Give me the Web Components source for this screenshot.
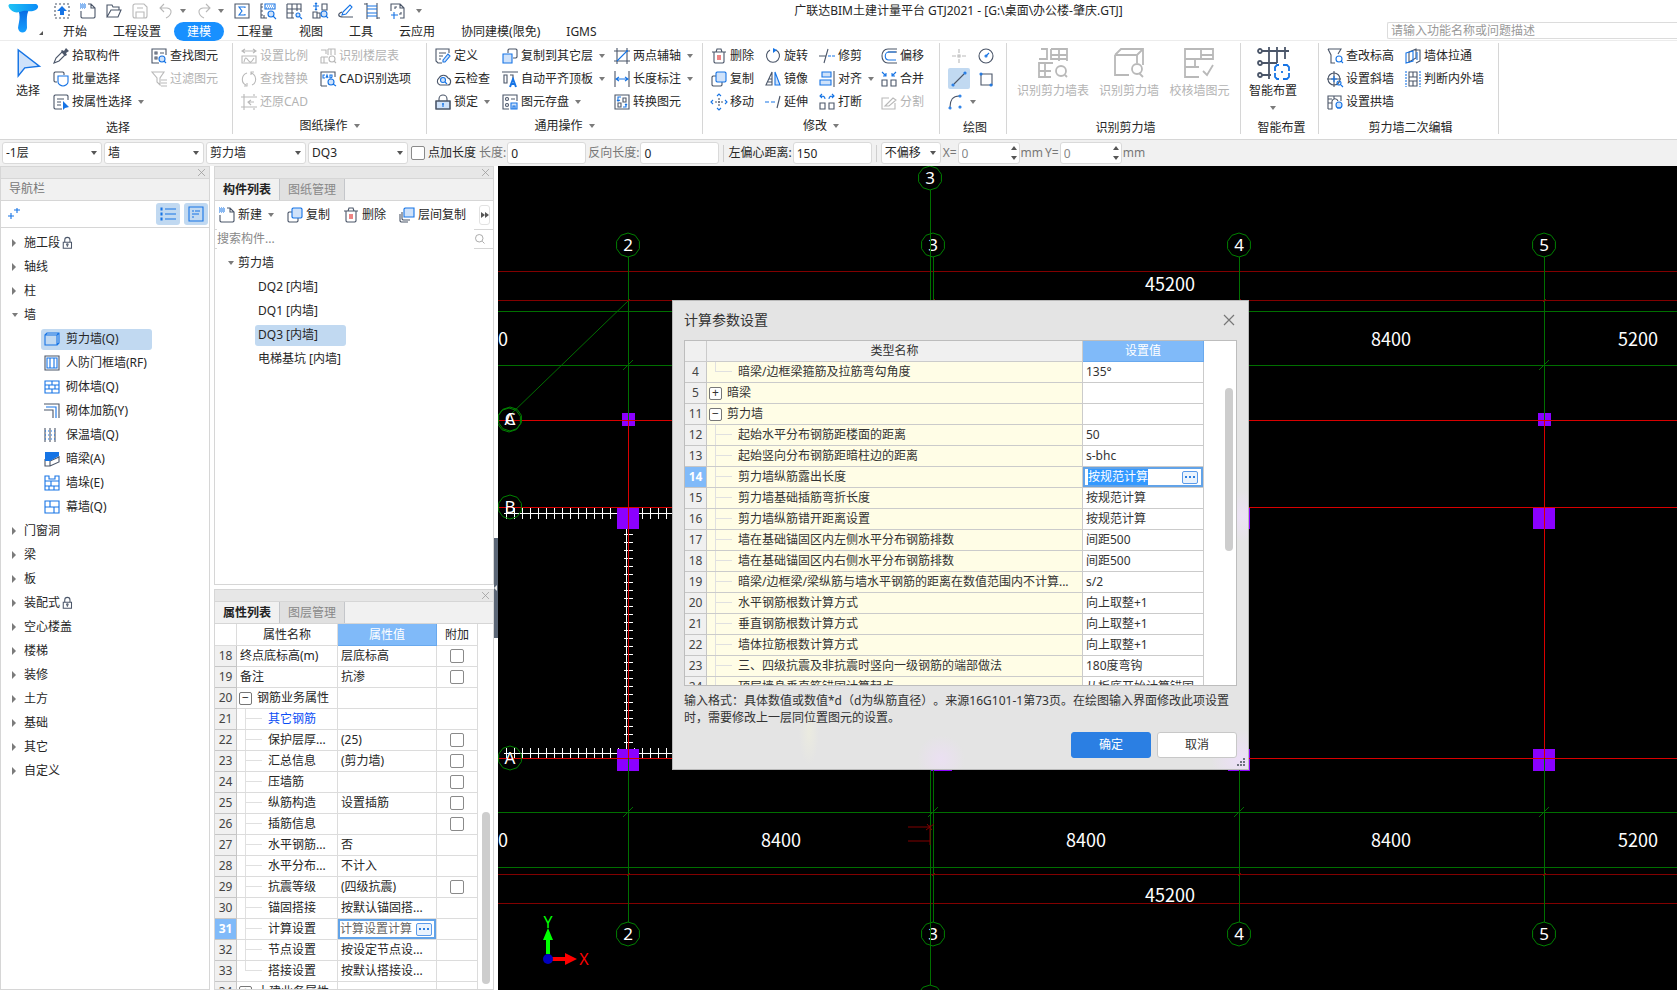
<!DOCTYPE html>
<html lang="zh-CN">
<head>
<meta charset="utf-8">
<title>广联达BIM土建计量平台 GTJ2021</title>
<style>
    html, body {
        height: 100%;
        margin: 0;
    }
    body {
        --blue: #1674e5;
        --slate: #4b5669;
        --pale: #cfe2fa;
        --line: #d6d6d6;
        --bar: #f1f1f1;
        --pick: #c1d9f1;
        --head: #80baf9;
        font: 12px/20px "Noto Sans", "Noto Sans CJK SC", sans-serif;
        color: #262626;
        background: #fff;
        overflow: hidden;
    }
</style>
</head>
<body>
<app-shell></app-shell>

<script>
// 16x16 drawings: plain strokes are slate, .b blue, .p pale fill, .k solid blue, .g solid slate
const ICONS = {
    upload: '<path d="M1 1h14v14H1z" stroke-dasharray="2 2"/><path class="k" d="M8 3l5 5h-3v4H6V8H3z"/>',
    fresh: '<path d="M8 1h3l4 4v9l-1 1H2l-1-1V8M11 1v4h4"/><path class="b" stroke-dasharray="1 1" d="M0 1h5M1 2h5M0 3h5M1 4h5M0 5h5"/>',
    open: '<path d="M1 14V2h5l1 2h6v3M1 14l4-7h10l-3 7z"/>',
    save: '<path d="M1 3a2 2 0 0 1 2-2h9l3 3v9a2 2 0 0 1-2 2H3a2 2 0 0 1-2-2zM4 15V9h8v6M5 5h6"/>',
    undo: '<path d="M6 1L2 5l4 4M2 5h7c6 1 5 7-1 10"/>',
    redo: '<path d="M10 1l4 4-4 4M14 5H7c-6 1-5 7 1 10"/>',
    sum: '<path d="M1 1h14v14H1z"/><path class="b" d="M11 5V4H5l3 4-3 4h6v-1"/>',
    ruler: '<path d="M3 1H1v14h6M1 4h2M1 8h2M1 12h2M4 12v3"/><path class="b" d="M5 1h10v5H5z"/><path class="b" stroke-dasharray="1 1" d="M7 3h7M6 5h8"/><circle class="b p" cx="11" cy="11" r="3"/><path class="b" d="M13 13l3 3"/>',
    grid: '<path d="M1 1h14v8M1 1v14h7M1 6h14M1 10h7M6 1v14M11 1v7"/><circle class="b p" cx="12" cy="12" r="2"/><path class="b" d="M14 14l2 2"/>',
    shift: '<path d="M10 1h5v6h-5zM1 9h4v6H1zM5 10h3v5H5"/><path class="b" d="M4 0v7M1 3h6M3 1l1-1 1 1M3 6l1 1 1-1"/><circle class="b p" cx="12" cy="11" r="3"/><path class="b" d="M14 13l2 2"/>',
    pen: '<path class="b" d="M5 9l7-7 2 2-6 7-4 1z"/><path d="M4 9c-5 2-4 5 1 5h10"/>',
    ladder: '<path d="M3 0v16M13 0v16M0 1h3M13 15h3"/><path class="b" d="M3 3h10M3 6h10M3 10h10M3 13h10"/>',
    addpage: '<path d="M10 1l4 4v10h-4M1 8V1h9v4h4M5 6V4h2M11 9v2H9"/><path class="b" d="M1 12h7M4 9v7"/>',
    cursor: '<path class="b p" d="M2 0v16l4-5 9-1z"/>',
    dropper: '<path d="M1 15l2-5 6-6 3 3-6 6z"/><path class="g" d="M8 3l1-1 2 1 2-3 3 3-3 2 1 2-2 1z"/>',
    batch: '<path d="M4 11H2l-1-1V2l1-1h8l1 1v2"/><path class="b" d="M5 5h10v6c0 2-3 4-5 4s-5-2-5-4z"/>',
    byprop: '<path d="M9 15H2l-1-1V2l1-1h12l1 1v4M4 5h7M4 8h4M4 11h4"/><path class="k" d="M10 7v9l2-2 4-1z"/>',
    find: '<path d="M15 7V1H1v14h7M4 4h2v2H4zM4 9h2v2H4zM9 5h4"/><circle class="b p" cx="11" cy="11" r="3"/><path class="b" d="M13 13l2 2"/>',
    filter: '<path d="M1 1h12L9 7v7l-3-3V7zM10 9h6M10 12h6M10 15h6"/>',
    scale: '<path d="M1 3h14M4 1L1 3l3 2M12 1l3 2-3 2M1 8h14v7H1zM3 14c1-5 2-5 4-2s3 3 6-2"/>',
    floors: '<path d="M1 2h5v4M8 1h7v6M8 7V1M11 1v6M1 9h7M4 9v6M1 9v6h7"/><circle cx="12" cy="11" r="3"/><path d="M14 13l2 2"/>',
    swap: '<path d="M6 2C0 4 0 12 5 14M10 2c6 2 6 10 1 12M3 15h3v-3M13 1h-3v3"/>',
    cad: '<path d="M1 15V1h14v5M1 15h6"/><path class="b" d="M5 4H3v3h2M6 7l1-3 1 3M10 4v3h1l1-1V4z"/><circle class="b p" cx="11" cy="11" r="3"/><path class="b" d="M13 13l3 2"/>',
    restore: '<path d="M3 0v16M0 3h16M0 13h16M13 0v2M10 6L7 8l3 3M7 8h6M13 14v2"/>',
    define: '<path d="M7 15H3L1 13V1h13v4M4 5h7M4 8h4M4 11h2"/><path class="b p" d="M8 12l5-6 2 2-5 6H8z"/>',
    cloud: '<path d="M5 14a4 4 0 0 1-1-7 5 5 0 0 1 9 0c4 1 3 7 0 7z"/><circle class="b p" cx="8" cy="9" r="2.5"/><path class="b" d="M10 11l2 2"/>',
    lock: '<path class="p" d="M1 7h14v8H1z"/><path d="M1 7h14v8H1zM4 7V5a4 4 0 0 1 8 0v2"/><path class="b" d="M8 9v4M7 10h2"/>',
    padlock: '<path d="M3 7h11v8H3zM5 7V4a3 3 0 0 1 7 0v3"/><circle cx="8.500" cy="10" r="1"/><path d="M8.500 11v2"/>',
    tofloor: '<path d="M6 5V2l1-1h7l1 1v7l-1 1h-3"/><path class="b p" d="M1 6h9v9H1z"/>',
    align: '<path d="M0 1h16M2 4h3v8H2zM8 4h3v4"/><path class="b" stroke-width="2" d="M8 16l3-8 3 8M9 13h4"/>',
    store: '<path d="M7 15H1V1h14v6M9 5h4"/><circle cx="5" cy="5" r="1.5"/><circle cx="5" cy="11" r="1.5"/><path class="b p" d="M9 9h6v6H9zM11 15v-3h2v3"/>',
    axis: '<path d="M3 0v16M0 3h16M0 13h16M13 0v16"/><path class="b" d="M3 13L13 3"/><circle class="k" cx="13" cy="3" r="1"/>',
    dim: '<path d="M1 0v16M15 0v16"/><path class="b" d="M2 8h12M5 6L2 8l3 2M11 6l3 2-3 2"/>',
    convert: '<path d="M1 1h14v14H1zM9 4h3v4H9zM4 9h3v4H4z"/><path class="b" d="M7 3H4v4M3 6l1 1 2-1M9 13h3v-3M11 11l1-1 1 1"/>',
    trash: '<path d="M1 4h14M5 4l1-3h4l1 3M3 4v10l1 1h8l1-1V4"/><path class="r" d="M7 7v5M9 7v5"/>',
    copy: '<path d="M5 5H2L1 6v8l1 1h8l1-1v-3"/><path class="b p" d="M6 1h8l1 1v8l-1 1H6L5 10V2z"/>',
    layers: '<path d="M3 5v7l1 1h7M1 7v7l1 1h7"/><path class="b p" d="M6 1h9v9H5V2z"/>',
    move: '<path stroke-dasharray="2 1" d="M8 4v8M4 8h8"/><path class="b" d="M6 2l2-2 2 2M6 14l2 2 2-2M2 6L0 8l2 2M14 6l2 2-2 2"/>',
    rotate: '<path d="M11 2a6.500 6.500 0 1 1-6 0"/><path class="k" d="M8 0l4 2-4 3z"/>',
    mirror: '<path d="M7 1v13H1zM3 11h4M4 8h3"/><path class="b p" d="M10 1v13h5z"/>',
    extend: '<path d="M15 2l-3 12"/><path class="b" d="M0 8h4M6 8h4"/>',
    trim: '<path d="M0 8h7M9 1L5 15"/><path class="b" d="M9 8h3M13 8h3"/>',
    aligned: '<path d="M15 0v16"/><path class="b p" d="M3 1h9v5H3zM1 9h11v5H1z"/>',
    cut: '<path d="M1 9h5v6H1zM10 9h5v6h-5z"/><path class="b" d="M6 5c0-3-2-3-5-3M3 0L1 2l2 2M10 5c0-3 2-3 5-3M13 0l2 2-2 2"/>',
    offset: '<path d="M16 1H7C-1 1-1 15 7 15h9M16 4H7"/><path class="b" d="M15 4H8c-5 0-5 8 0 8h7"/>',
    merge: '<path d="M1 9h5v6H1zM10 9h5v6h-5z"/><path class="b" d="M1 1l4 4M5 2v3H2M15 1l-4 4M11 2v3h3"/>',
    divide: '<path d="M8 4H1v11h13V9M4 12l8-8 3 2-7 6z"/>',
    point: '<path d="M8 1v4M8 11v4M1 8h4M11 8h4M7 7h2v2H7z"/>',
    circle: '<circle cx="8" cy="8" r="7"/><path class="b" d="M8 8l3-3"/><circle class="b" cx="8" cy="8" r="1"/>',
    line: '<path d="M3 13L13 3"/><circle class="b" cx="2" cy="14" r="1"/><circle class="b" cx="14" cy="2" r="1"/>',
    rect: '<path d="M3 3h11v11H3z"/><circle class="b" cx="3" cy="3" r="1"/><circle class="b" cx="13" cy="14" r="1"/>',
    arc: '<path d="M2 13C2 6 5 2 11 2"/><circle class="b" cx="2" cy="14" r="1"/><circle class="b" cx="12" cy="2" r="1"/><circle class="b" cx="12" cy="13" r="1"/>',
    recogTable: '<path d="M2 1h3v5H1M7 1h8v6M7 1v5h8M7 4h8M11 1v6M4 8H1v7h6M1 12h6M4 8v7M4 8h4"/><circle cx="12" cy="12" r="2.500"/><path d="M14 14l1 1"/>',
    recogWall: '<path d="M1 4l3-3h11v8M1 4h11v4M1 4v10h7M12 4l3-3"/><circle cx="12" cy="11" r="2.500"/><path d="M13 13l2 2"/>',
    check: '<path d="M1 1h14v5H1zM9 1v5M9 4h6M1 6v9h7M1 10h7M6 6v4M10 12l2 2 3-5"/>',
    smart: '<path d="M1 2h15M1 8h9M1 14h6M6 0v16M10 0v8M14 0v6"/><circle class="w" cx="1.500" cy="2" r="1"/><circle class="w" cx="1.500" cy="8" r="1"/><circle class="w" cx="1.500" cy="14" r="1"/><path class="b" d="M9 12v-2l1-1h1M13 9h2l1 1v2M9 13v2l1 1h1M13 16h2l1-1v-2M12.500 12v1"/>',
    elev: '<path d="M1 1h13l-3 5M1 1l3 6v8h4"/><circle class="b" cx="12" cy="11" r="3"/><path class="b" d="M14 13l2 2"/>',
    slant: '<circle cx="7" cy="8" r="6"/><path d="M7 0v16M0 8h14"/><path class="b" d="M7 5v6M4 8h6"/><circle class="b" cx="12" cy="12" r="2"/><path class="b" d="M14 14l2 2"/>',
    arch: '<path d="M1 15V2h13v5M1 5h4M1 9h4M1 15h4V7c1-3 5-3 6 0M7 2v3"/><circle class="b p" cx="12" cy="11" r="3"/><path class="b" d="M10 14h4"/>',
    through: '<path d="M4 4l7-3v9l-7 4zM9 2h6v11l-4 2"/><path class="b" d="M1 5l7-2v10l-7 2zM12 4v8"/>',
    inout: '<path d="M4 1h8v14H4zM4 6h8M4 10h8M8 1v5M8 10v5"/><path class="b" stroke-dasharray="2 1" d="M1 0v16M15 0v16"/>',
    plus2: '<path class="b" d="M11 2v5M8 4h6M5 7v6M2 10h6"/>',
    list: '<path class="b" d="M5 3h11M5 8h11M5 13h11M1 2h1v2H1zM1 7h1v2H1zM1 12h1v2H1z"/>',
    card: '<path class="b" d="M1 1h14v14H1zM4 5h2M7 5h5M4 8h7M4 11h2"/>',
    wall: '<path class="b" d="M1 4l2-2h12v10l-2 2M1 4h12v10H1zM13 4l2-2"/>',
    frame: '<path d="M1 1h14v14H1z"/><path class="b" d="M3 3h10v10H3zM6 3v10M10 3v10"/>',
    brick: '<path class="b" d="M1 2h14v12H1zM1 6h14M1 10h14M8 2v4M5 6v4M11 6v4M8 10v4"/>',
    rebar: '<path d="M0 1h15v14M0 7h9v8"/><path class="b" d="M2 4h10v11"/>',
    insul: '<path d="M1 1v14M6 1v14M11 1v14"/><path class="b" stroke-dasharray="1 2" d="M1 4h12M1 8h12M1 12h12"/>',
    beam: '<path d="M1 8v7h5l9-4V5M6 15v-5l9-4"/><path class="k" d="M1 1h14v4L6 10H1z"/>',
    pier: '<path class="b" d="M1 1h4v3h6V1h4v14H1zM1 6h14M1 11h14M7 6v5M10 11v4M5 11v4"/>',
    curtain: '<path class="b" d="M1 2h14v12H1zM1 8h14M6 2v6M10 8v6"/>',
    search: '<circle cx="7" cy="7" r="5"/><path d="M11 11l3 3"/>',
    close: '<path d="M3 3l10 10M13 3L3 13"/>'
};

function attach(el, html) {
    const template = document.createElement('template');
    template.innerHTML = html;
    el.attachShadow({ mode: 'open' }).appendChild(template.content.cloneNode(true));
    return el.shadowRoot;
}

const caretCss = `
    .caret {
        flex: none;
        width: 0;
        border: 3px solid transparent;
        border-top: 4px solid #7b7b7b;
        border-bottom: 0;
    }
`;

class UiIcon extends HTMLElement {
    connectedCallback() {
        if (this.shadowRoot) return;
        attach(this, `
            <style>
                :host { display: inline-block; flex: none; width: 16px; height: 16px; }
                svg { display: block; width: 100%; height: 100%; overflow: visible; fill: none; stroke: var(--slate); stroke-width: var(--stroke, 1.1); }
                .b { stroke: var(--blue); }
                .r { stroke: #e02020; }
                .p { fill: var(--pale); }
                .k { fill: var(--blue); stroke: none; }
                .g { fill: var(--slate); stroke: none; }
                .w { fill: #fff; }
            </style>
            <svg viewBox="0 0 16 16" aria-hidden="true">${ICONS[this.getAttribute('name')] || ''}</svg>
        `);
    }
}
customElements.define('ui-icon', UiIcon);

// tool-button: icon="" [caret] [off] [big] [picked]
class ToolButton extends HTMLElement {
    connectedCallback() {
        if (this.shadowRoot) return;
        const off = this.hasAttribute('off');
        attach(this, `
            <style>
                :host { display: flex; }
                :host([off]) { --blue: #b9b9b9; --slate: #b9b9b9; --pale: none; }
                button {
                    display: flex;
                    align-items: center;
                    gap: 3px;
                    border: 0;
                    padding: 0;
                    background: none;
                    font: inherit;
                    color: inherit;
                    white-space: nowrap;
                }
                button:disabled { color: #b3b3b3; }
                .caret { margin-left: 3px; }
                ${caretCss}
                :host([big]) { grid-row: span 3; justify-content: center; --stroke: 0.9; }
                :host([big]) button { flex-direction: column; justify-content: flex-start; gap: 2px; padding-top: 3px; }
                :host([big]) ui-icon { width: 32px; height: 32px; }
                :host([big="small"]) { justify-content: flex-start; padding-left: 7px; }
                :host([big="small"]) ui-icon { width: 26px; height: 26px; margin: 3px 0; }
                :host([big]) .caret { margin: 3px 0 0; }
                :host([picked]) button { background: var(--pick); padding: 2px 3px; margin: 1px 0; border-radius: 2px; }
                :host([plain]) button { padding: 0 3px; }
            </style>
            <button type="button" ${off ? 'disabled' : ''} aria-label="${this.getAttribute('icon')}">
                <ui-icon name="${this.getAttribute('icon')}"></ui-icon>
                <slot></slot>
                ${this.hasAttribute('caret') ? '<span class="caret"></span>' : ''}
            </button>
        `);
        if (this.textContent.trim()) this.shadowRoot.querySelector('button').removeAttribute('aria-label');
    }
}
customElements.define('tool-button', ToolButton);

class RibbonGroup extends HTMLElement {
    connectedCallback() {
        if (this.shadowRoot) return;
        attach(this, `
            <style>
                :host {
                    display: block;
                    flex: none;
                    padding: 3px 9px 0 8px;
                    background: linear-gradient(var(--line), var(--line)) right 2px / 1px 91px no-repeat;
                }
                .tools {
                    display: grid;
                    grid-template: repeat(3, 23px) / ${this.getAttribute('cols')};
                    grid-auto-flow: column;
                }
                .label { display: flex; justify-content: center; align-items: center; gap: 6px; box-sizing: border-box; height: 26px; }
                :host(:not([caret])) .label { padding: 3px 0 0 4px; }
                ${caretCss}
            </style>
            <div class="tools"><slot></slot></div>
            <div class="label">${this.getAttribute('label')}${this.hasAttribute('caret') ? '<span class="caret"></span>' : ''}</div>
        `);
    }
}
customElements.define('ribbon-group', RibbonGroup);

class AppTitle extends HTMLElement {
    connectedCallback() {
        const quick = names => names.map(n => `<tool-button icon="${n}"></tool-button>`).join('');
        const tabs = ['开始', '工程设置', '建模', '工程量', '视图', '工具', '云应用', '协同建模(限免)', 'IGMS'];
        attach(this, `
            <style>
                :host { display: grid; grid-template: 21px 20px / 50px 1fr; box-shadow: inset 0 -1px #ececec; }
                .logo { grid-row: span 2; display: flex; align-items: flex-end; padding-left: 7px; }
                .logo i { border: 4px solid transparent; border-width: 4px 0 0 4px; border-bottom: 4px solid #555; border-top: 0; margin-bottom: 6px; }
                .quick, nav { display: flex; align-items: center; }
                nav { align-items: flex-end; }
                .quick { gap: 10px; padding-left: 4px; }
                h1 { flex: 1; margin: 0; padding-right: 192px; font: inherit; text-align: center; }
                nav button {
                    border: 0;
                    border-radius: 10px;
                    padding: 0 13px;
                    height: 19px;
                    font: inherit;
                    line-height: 19px;
                    color: inherit;
                    background: none;
                    white-space: nowrap;
                }
                nav .on { background: #1890ff; color: #fff; }
                input {
                    width: 290px;
                    height: 17px;
                    box-sizing: border-box;
                    margin: 0 0 2px auto;
                    border: 1px solid #dcdcdc;
                    border-right: 0;
                    border-radius: 2px 0 0 2px;
                    padding: 0 3px;
                    font: inherit;
                    line-height: 15px;
                    outline: none;
                }
                input::placeholder { color: #999; }
                ${caretCss}
            </style>
            <div class="logo">
                <svg width="32" height="41" viewBox="0 0 32 41">
                    <defs>
                        <linearGradient id="bar"><stop offset="0" stop-color="#20c3f4"/><stop offset="1" stop-color="#0a8cf8"/></linearGradient>
                        <linearGradient id="stem" x2="0" y2="1"><stop offset="0" stop-color="#0866e0"/><stop offset="1" stop-color="#16a0ff"/></linearGradient>
                    </defs>
                    <path fill="url(#stem)" d="M11 9l12-1c-4 6-3 11-3 20-1 6-8 6-9 0 1-7 3-11 0-19z"/>
                    <path fill="url(#bar)" d="M3 4h26c4 2 2 6-3 7-4 1-6-1-10 0-5 2-9 2-12-1-2-2-4-5-1-6z"/>
                </svg><i></i>
            </div>
            <div class="quick">
                ${quick(['upload', 'fresh', 'open'])}
                <tool-button icon="save" off></tool-button>
                <tool-button icon="undo" off caret></tool-button>
                <tool-button icon="redo" off caret></tool-button>
                ${quick(['sum', 'ruler', 'grid', 'shift', 'pen', 'ladder', 'addpage'])}
                <span class="caret"></span>
                <h1>广联达BIM土建计量平台 GTJ2021 - [G:\\桌面\\办公楼-肇庆.GTJ]</h1>
            </div>
            <nav>
                ${tabs.map(t => `<button type="button" class="${t === '建模' ? 'on' : ''}">${t}</button>`).join('')}
                <input type="text" aria-label="搜索功能" placeholder="请输入功能名称或问题描述">
            </nav>
        `);
    }
}
customElements.define('app-title', AppTitle);

class AppRibbon extends HTMLElement {
    connectedCallback() {
        attach(this, `
            <style>
                :host { display: flex; height: 98px; overflow: hidden; }
            </style>
            <ribbon-group cols="45px 98px 73px" label="选择">
                <tool-button icon="cursor" big="small">选择</tool-button>
                <tool-button icon="dropper">拾取构件</tool-button>
                <tool-button icon="batch">批量选择</tool-button>
                <tool-button icon="byprop" caret>按属性选择</tool-button>
                <tool-button icon="find">查找图元</tool-button>
                <tool-button icon="filter" off>过滤图元</tool-button>
            </ribbon-group>
            <ribbon-group cols="79px 98px" label="图纸操作" caret>
                <tool-button icon="scale" off>设置比例</tool-button>
                <tool-button icon="swap" off>查找替换</tool-button>
                <tool-button icon="restore" off>还原CAD</tool-button>
                <tool-button icon="floors" off>识别楼层表</tool-button>
                <tool-button icon="cad">CAD识别选项</tool-button>
            </ribbon-group>
            <ribbon-group cols="67px 112px 80px" label="通用操作" caret>
                <tool-button icon="define">定义</tool-button>
                <tool-button icon="cloud">云检查</tool-button>
                <tool-button icon="lock" caret>锁定</tool-button>
                <tool-button icon="tofloor" caret>复制到其它层</tool-button>
                <tool-button icon="align" caret>自动平齐顶板</tool-button>
                <tool-button icon="store" caret>图元存盘</tool-button>
                <tool-button icon="axis" caret>两点辅轴</tool-button>
                <tool-button icon="dim" caret>长度标注</tool-button>
                <tool-button icon="convert">转换图元</tool-button>
            </ribbon-group>
            <ribbon-group cols="54px 54px 62px 50px" label="修改" caret>
                <tool-button icon="trash">删除</tool-button>
                <tool-button icon="copy">复制</tool-button>
                <tool-button icon="move">移动</tool-button>
                <tool-button icon="rotate">旋转</tool-button>
                <tool-button icon="mirror">镜像</tool-button>
                <tool-button icon="extend">延伸</tool-button>
                <tool-button icon="trim">修剪</tool-button>
                <tool-button icon="aligned" caret>对齐</tool-button>
                <tool-button icon="cut">打断</tool-button>
                <tool-button icon="offset">偏移</tool-button>
                <tool-button icon="merge">合并</tool-button>
                <tool-button icon="divide" off>分割</tool-button>
            </ribbon-group>
            <ribbon-group cols="30px 20px" label="绘图">
                <tool-button icon="point" off plain></tool-button>
                <tool-button icon="line" picked></tool-button>
                <tool-button icon="arc" caret></tool-button>
                <tool-button icon="circle"></tool-button>
                <tool-button icon="rect"></tool-button>
            </ribbon-group>
            <ribbon-group cols="76px 76px 65px" label="识别剪力墙">
                <tool-button icon="recogTable" big off>识别剪力墙表</tool-button>
                <tool-button icon="recogWall" big off>识别剪力墙</tool-button>
                <tool-button icon="check" big off>校核墙图元</tool-button>
            </ribbon-group>
            <ribbon-group cols="48px 13px" label="智能布置">
                <tool-button icon="smart" big caret>智能布置</tool-button>
            </ribbon-group>
            <ribbon-group cols="78px 85px" label="剪力墙二次编辑">
                <tool-button icon="elev">查改标高</tool-button>
                <tool-button icon="slant">设置斜墙</tool-button>
                <tool-button icon="arch">设置拱墙</tool-button>
                <tool-button icon="through">墙体拉通</tool-button>
                <tool-button icon="inout">判断内外墙</tool-button>
            </ribbon-group>
        `);
    }
}
customElements.define('app-ribbon', AppRibbon);

class OptionBar extends HTMLElement {
    connectedCallback() {
        const combo = (label, value, cls = '') => `
            <span class="combo ${cls}"><select aria-label="${label}"><option>${value}</option></select><i></i></span>`;
        attach(this, `
            <style>
                :host {
                    display: flex;
                    align-items: center;
                    height: 26px;
                    padding-left: 2px;
                    border-top: 1px solid var(--line);
                    background: var(--bar);
                    white-space: nowrap;
                }
                select, input[type=text], input[type=number] {
                    appearance: none;
                    box-sizing: border-box;
                    width: 100%;
                    height: 22px;
                    border: 1px solid #dadada;
                    border-radius: 3px;
                    padding: 0 3px;
                    background: #fff;
                    font: inherit;
                    color: inherit;
                    outline: none;
                }
                input::-webkit-inner-spin-button { display: none; }
                .combo, .spin { display: grid; align-items: center; flex: none; width: 100px; margin-right: 2px; }
                .combo > *, .spin > * { grid-area: 1 / 1; }
                .combo.short { width: 60px; }
                .combo i { justify-self: end; margin-right: 5px; border: 3px solid transparent; border-top: 4px solid #555; border-bottom: 0; }
                .field { display: flex; align-items: center; gap: 1px; }
                .field input[type=text] { width: 79px; margin-right: 2px; }
                .spin { width: 62px; margin: 0; color: #888; }
                .spin span { justify-self: end; display: grid; gap: 6px; margin-right: 3px; }
                .spin b { border: 3px solid transparent; border-bottom: 4px solid #555; border-top: 0; }
                .spin b + b { border-top: 4px solid #555; border-bottom: 0; }
                .dim { color: #777; }
                .dim + .dim:last-child { margin-left: 2px; }
                .dim input[type=text] { color: #262626; }
                .check { display: flex; align-items: center; gap: 3px; margin: 0 3px 0 1px; }
                .check input {
                    appearance: none;
                    width: 14px;
                    height: 14px;
                    margin: 0;
                    border: 1px solid #8a8a8a;
                    border-radius: 2px;
                    background: #fff;
                }
                hr { width: 1px; height: 17px; margin: 0 4px 0 2px; border: 0; background: #cfcfcf; }
            </style>
            ${combo('楼层', '-1层')}${combo('类别', '墙')}${combo('类型', '剪力墙')}${combo('构件', 'DQ3')}
            <label class="check"><input type="checkbox">点加长度</label>
            <label class="field dim">长度:<input type="text" value="0"></label>
            <label class="field dim">反向长度:<input type="text" value="0"></label>
            <hr>
            <label class="field">左偏心距离:<input type="text" value="150"></label>
            <hr>
            ${combo('偏移', '不偏移', 'short')}
            <label class="field dim">X=<span class="spin"><input type="number" value="0"><span><b></b><b></b></span></span>mm</label>
            <label class="field dim">Y=<span class="spin"><input type="number" value="0"><span><b></b><b></b></span></span>mm</label>
        `);
    }
}
customElements.define('option-bar', OptionBar);

// dock-panel: either heading="" or tabs="a,b" (the first tab is active)
class DockPanel extends HTMLElement {
    connectedCallback() {
        if (this.shadowRoot) return;
        const tabs = this.getAttribute('tabs');
        const head = tabs
            ? tabs.split(',').map((t, i) => `<button type="button" role="tab" aria-selected="${i === 0}">${t}</button>`).join('')
            : `<span>${this.getAttribute('heading')}</span>`;
        attach(this, `
            <style>
                :host {
                    display: flex;
                    flex-direction: column;
                    box-sizing: border-box;
                    border: 1px solid var(--line);
                    background: #fff;
                    overflow: hidden;
                }
                .strip { flex: none; height: 11px; display: flex; justify-content: flex-end; background: #e7e7e7; border-bottom: 1px solid var(--line); }
                .strip button { border: 0; padding: 0; margin-right: 2px; height: 11px; background: none; --slate: #999; }
                .strip ui-icon { width: 11px; height: 11px; display: block; }
                header { flex: none; display: flex; height: 21px; background: var(--bar); border-bottom: 1px solid var(--line); color: #777; }
                header span { padding-left: 8px; line-height: 20px; }
                header button {
                    border: 0;
                    border-right: 1px solid #c4c6ca;
                    padding: 0 8px;
                    background: #e0e0e0;
                    font: inherit;
                    color: #888;
                }
                header button[aria-selected=true] { background: var(--bar); color: #222; font-weight: bold; }
            </style>
            <div class="strip"><button type="button" aria-label="关闭"><ui-icon name="close"></ui-icon></button></div>
            <header>${head}</header>
            <slot></slot>
        `);
    }
}
customElements.define('dock-panel', DockPanel);

// tree-item: [state=open|closed|leaf] [icon] [picked] [locked]
class TreeItem extends HTMLElement {
    connectedCallback() {
        if (this.shadowRoot) return;
        const icon = this.getAttribute('icon');
        attach(this, `
            <style>
                :host { display: flex; align-items: center; height: 24px; padding-left: var(--indent, 11px); }
                :host([state=leaf]) { padding-left: var(--leaf-indent, 40px); }
                i { flex: none; width: 6px; margin-right: var(--arrow-gap, 6px); }
                i::before { content: ""; display: block; width: 0; border: 4px solid transparent; border-left: 4px solid #7b7b7b; border-right: 0; }
                :host([state=open]) i::before { border: 3px solid transparent; border-top: 4px solid #7b7b7b; border-bottom: 0; }
                :host([state=leaf]) i { display: none; }
                .text { display: flex; align-items: center; gap: 6px; box-sizing: border-box; height: 21px; padding: 0 3px; border-radius: 3px; white-space: nowrap; }
                :host([state=open]) .text, :host([state=closed]) .text { padding: 0; gap: 1px; }
                :host([picked]) .text { background: var(--pick); min-width: var(--pick-width, 111px); }
                .lock { width: 12px; height: 12px; --stroke: 1.4; }
            </style>
            <i></i>
            <span class="text">
                ${icon ? `<ui-icon name="${icon}"></ui-icon>` : ''}<span><slot></slot></span>
                ${this.hasAttribute('locked') ? '<ui-icon class="lock" name="padlock"></ui-icon>' : ''}
            </span>
        `);
    }
}
customElements.define('tree-item', TreeItem);

class NavPanel extends HTMLElement {
    connectedCallback() {
        const walls = [
            ['wall', '剪力墙(Q)'], ['frame', '人防门框墙(RF)'], ['brick', '砌体墙(Q)'], ['rebar', '砌体加筋(Y)'],
            ['insul', '保温墙(Q)'], ['beam', '暗梁(A)'], ['pier', '墙垛(E)'], ['curtain', '幕墙(Q)']
        ];
        const rest = ['门窗洞', '梁', '板', '装配式', '空心楼盖', '楼梯', '装修', '土方', '基础', '其它', '自定义'];
        attach(this, `
            <style>
                :host { display: grid; }
                .bar { display: flex; align-items: center; gap: 4px; height: 26px; padding: 0 1px 0 5px; border-bottom: 1px solid var(--line); margin-bottom: 3px; }
                .bar button { border: 0; padding: 3px 4px; height: 22px; border-radius: 3px; background: var(--pick); }
                .bar button:first-child { margin-right: auto; padding: 3px 0; background: none; }
                .bar ui-icon { display: block; }
            </style>
            <dock-panel heading="导航栏">
                <div class="bar">
                    <button type="button" aria-label="添加"><ui-icon name="plus2"></ui-icon></button>
                    <button type="button" aria-label="列表"><ui-icon name="list"></ui-icon></button>
                    <button type="button" aria-label="卡片"><ui-icon name="card"></ui-icon></button>
                </div>
                <tree-item state="closed" locked>施工段</tree-item>
                <tree-item state="closed">轴线</tree-item>
                <tree-item state="closed">柱</tree-item>
                <tree-item state="open">墙</tree-item>
                ${walls.map(([icon, text], i) => `<tree-item state="leaf" icon="${icon}" ${i ? '' : 'picked'}>${text}</tree-item>`).join('')}
                ${rest.map(t => `<tree-item state="closed" ${t === '装配式' ? 'locked' : ''}>${t}</tree-item>`).join('')}
            </dock-panel>
        `);
    }
}
customElements.define('nav-panel', NavPanel);

class ComponentPanel extends HTMLElement {
    connectedCallback() {
        attach(this, `
            <style>
                :host { display: grid; --indent: 13px; --arrow-gap: 4px; --leaf-indent: 40px; --pick-width: 91px; }
                .bar { display: flex; align-items: center; justify-content: space-between; height: 28px; padding: 0 3px 0 4px; border-bottom: 1px solid var(--line); }
                .more { border: 1px solid #e2e2e2; border-radius: 3px; padding: 0; width: 11px; height: 20px; background: #fff; display: flex; align-items: center; justify-content: center; }
                .more i { border: 3px solid transparent; border-left: 4px solid #555; border-right: 0; }
                .search { display: flex; align-items: center; height: 18px; border-bottom: 1px solid var(--line); padding: 0 7px 0 2px; margin-bottom: 2px; --slate: #999; }
                .search input { flex: 1; min-width: 0; border: 0; padding: 0; font: inherit; outline: none; }
                .search input::placeholder { color: #888; }
                .search ui-icon { width: 12px; height: 12px; }
            </style>
            <dock-panel tabs="构件列表,图纸管理">
                <div class="bar">
                    <tool-button icon="fresh" caret>新建</tool-button>
                    <tool-button icon="copy">复制</tool-button>
                    <tool-button icon="trash">删除</tool-button>
                    <tool-button icon="layers">层间复制</tool-button>
                    <button class="more" type="button" aria-label="更多"><i></i><i></i></button>
                </div>
                <div class="search">
                    <input type="text" aria-label="搜索构件" placeholder="搜索构件...">
                    <ui-icon name="search"></ui-icon>
                </div>
                <tree-item state="open">剪力墙</tree-item>
                <tree-item state="leaf">DQ2 [内墙]</tree-item>
                <tree-item state="leaf">DQ1 [内墙]</tree-item>
                <tree-item state="leaf" picked>DQ3 [内墙]</tree-item>
                <tree-item state="leaf">电梯基坑 [内墙]</tree-item>
            </dock-panel>
        `);
    }
}
customElements.define('component-panel', ComponentPanel);

/*
 * data-grid: numbered rows with a tree column and a value column.
 * rows: [number, kind, name, value, extra]
 * kind: flat | plus | minus | kid | last, a trailing "!" marks the row being edited
 * extra: true draws a tick box in the third column
 */
class DataGrid extends HTMLElement {
    set data({ heads, widths, rows }) {
        const root = this.shadowRoot || attach(this, '');
        const three = heads.length > 2;
        const body = rows.map(([no, kind, name, value, extra]) => {
            const edit = kind.endsWith('!');
            const type = kind.replace('!', '');
            const box = type === 'plus' || type === 'minus' ? `<button type="button" class="box" aria-label="展开">${type === 'plus' ? '+' : '−'}</button>` : '';
            const guide = type === 'kid' || type === 'last' ? `<i class="guide ${type}"></i>` : '';
            const cell = edit
                ? `<div class="edit"><input type="text" aria-label="${name}" value="${value}"><button type="button" aria-label="更多"><i></i><i></i><i></i></button></div>`
                : value;
            return `<tr class="${edit ? 'now' : ''}">
                <th scope="row">${no}</th>
                <td class="name"><div class="${name === '其它钢筋' ? 'link' : ''}">${box}${guide}<span>${name}</span></div></td>
                <td class="value">${cell}</td>
                ${three ? `<td class="tick">${extra ? `<input type="checkbox" aria-label="附加 ${name}">` : ''}</td>` : ''}
            </tr>`;
        }).join('');
        root.innerHTML = `
            <style>
                :host { display: flex; overflow: hidden; background: #fff; }
                table { flex: var(--grow, none); width: 0; min-width: var(--grid-width, auto); table-layout: fixed; border-spacing: 0; align-self: flex-start; }
                th, td {
                    box-sizing: border-box;
                    height: 21px;
                    padding: 0;
                    border: solid var(--cell-line, #dcdcdc);
                    border-width: 0 1px 1px 0;
                    font-weight: normal;
                    line-height: 20px;
                    white-space: nowrap;
                    overflow: hidden;
                }
                thead th { height: var(--head-height, 21px); background: var(--head-fill, #fff); }
                thead th:nth-child(3) { background: var(--head); color: #fff; border-color: #69a9ee; }
                tbody th { background: #f0f0f0; border-color: #c6c6c6; color: #444; }
                .now th { background: var(--head); color: #fff; font-weight: bold; }
                .name { background: var(--name-fill, #fff); }
                .name div { display: flex; align-items: center; height: 20px; padding: 0 2px; }
                .name span { margin-left: 1px; }
                .link { color: #0a4df5; }
                .box {
                    flex: none;
                    width: 13px;
                    height: 13px;
                    padding: 0;
                    margin-right: 4px;
                    border: 1px solid #777;
                    border-radius: 2px;
                    background: #fff;
                    font: 12px/10px "Noto Sans", sans-serif;
                    color: #333;
                }
                .guide {
                    flex: none;
                    width: 17px;
                    height: 20px;
                    margin: 0 5px 0 6px;
                    background:
                        linear-gradient(#e0e0e0, #e0e0e0) 0 0 / 1px 100% no-repeat,
                        linear-gradient(#e0e0e0, #e0e0e0) 0 9px / 100% 1px no-repeat;
                }
                .guide.last { background-size: 1px 10px, 100% 1px; }
                .value { padding: 0 3px; text-overflow: ellipsis; }
                .now .value { padding: 0; }
                .edit { display: flex; align-items: center; box-sizing: border-box; height: 20px; padding: var(--edit-pad, 0 3px); border: 2px solid #62a3e8; color: var(--edit-ink, inherit); }
                .edit input { flex: 1; min-width: 0; width: 0; padding: 0; border: 0; font: inherit; line-height: 16px; height: 16px; color: inherit; outline: none; }
                .edit input::selection { background: #3399ff; color: #fff; }
                .edit button { display: flex; align-items: center; justify-content: center; gap: 2px; width: 16px; height: 13px; padding: 0; border: 1px solid #5b9bea; border-radius: 2px; background: #eaf3fd; }
                .edit button i { width: 2px; height: 2px; background: #2d7fe0; }
                .tick { text-align: center; }
                .tick input { appearance: none; display: block; box-sizing: border-box; width: 14px; height: 14px; margin: 0 auto; border: 1px solid #8a8a8a; border-radius: 2px; background: #fff; }
            </style>
            <table>
                <colgroup>${widths.map(w => `<col style="${w ? `width: ${w}px` : ''}">`).join('')}</colgroup>
                <thead><tr><th></th>${heads.map(h => `<th scope="col">${h}</th>`).join('')}</tr></thead>
                <tbody>${body}</tbody>
            </table>
            <slot></slot>
        `;
    }
}
customElements.define('data-grid', DataGrid);

class PropertyPanel extends HTMLElement {
    connectedCallback() {
        const root = attach(this, `
            <style>
                :host { display: grid; min-height: 0; }
                data-grid { flex: 1; --grid-width: 263px; --head-height: 22px; --edit-pad: 0 2px 0 0; --edit-ink: #666; }
                .bar { width: 8px; height: 172px; margin: 188px 3px 0 auto; border-radius: 4px; background: #cdcdcd; }
            </style>
            <dock-panel tabs="属性列表,图层管理"><data-grid></data-grid></dock-panel>
        `);
        const grid = root.querySelector('data-grid');
        grid.data = {
            heads: ['属性名称', '属性值', '附加'],
            widths: [22, 101, 99, 41],
            rows: [
                [18, 'flat', '终点底标高(m)', '层底标高', true],
                [19, 'flat', '备注', '抗渗', true],
                [20, 'minus', '钢筋业务属性', ''],
                [21, 'kid', '其它钢筋', ''],
                [22, 'kid', '保护层厚...', '(25)', true],
                [23, 'kid', '汇总信息', '(剪力墙)', true],
                [24, 'kid', '压墙筋', '', true],
                [25, 'kid', '纵筋构造', '设置插筋', true],
                [26, 'kid', '插筋信息', '', true],
                [27, 'kid', '水平钢筋...', '否'],
                [28, 'kid', '水平分布...', '不计入'],
                [29, 'kid', '抗震等级', '(四级抗震)', true],
                [30, 'kid', '锚固搭接', '按默认锚固搭...'],
                [31, 'kid!', '计算设置', '计算设置计算'],
                [32, 'kid', '节点设置', '按设定节点设...'],
                [33, 'last', '搭接设置', '按默认搭接设...'],
                [34, 'plus', '土建业务属性', '']
            ]
        };
        const bar = document.createElement('div');
        bar.className = 'bar';
        grid.appendChild(bar);
    }
}
customElements.define('property-panel', PropertyPanel);

class ParamDialog extends HTMLElement {
    connectedCallback() {
        const root = attach(this, `
            <style>
                :host {
                    display: flex;
                    flex-direction: column;
                    box-sizing: border-box;
                    width: 577px;
                    padding: 0 11px 11px;
                    border: 1px solid #b9b9b9;
                    color: #333;
                    background:
                        radial-gradient(circle at 268px 458px, #ebe0f2, transparent 24px),
                        radial-gradient(circle at 568px 458px, #eddff8, transparent 30px),
                        radial-gradient(circle at 570px 215px, #ece2f5, transparent 26px),
                        radial-gradient(ellipse 10px 34px at 136px 430px, #ebebe0, transparent),
                        #e4e4e4;
                }
                header { display: flex; justify-content: space-between; align-items: center; box-sizing: border-box; height: 39px; padding-bottom: 2px; font-size: 14px; --slate: #777; --stroke: 1.2; }
                header button { border: 0; padding: 0; background: none; }
                header ui-icon { display: block; width: 16px; height: 16px; }
                data-grid {
                    box-sizing: border-box;
                    height: 346px;
                    border: 1px solid #bdbdbd;
                    --grow: 1;
                    --head-height: 21px;
                    --head-fill: #f0f0f0;
                    --name-fill: #fffde6;
                    --cell-line: #cbcbcb;
                }
                .bar { width: 8px; height: 163px; margin: 47px 3px 0 21px; border-radius: 4px; background: #cdcdcd; }
                p { margin: 6px 0; line-height: 17px; text-spacing-trim: space-all; }
                footer { display: flex; justify-content: flex-end; gap: 6px; }
                footer button { width: 80px; height: 26px; border: 1px solid #c8c8c8; border-radius: 3px; background: #fff; font: inherit; color: inherit; }
                footer .ok { background: #2b7fe3; border-color: #2b7fe3; color: #fff; }
                .grip { position: absolute; right: 3px; bottom: 3px; fill: #6f7480; }
            </style>
            <header>计算参数设置<button type="button" aria-label="关闭"><ui-icon name="close"></ui-icon></button></header>
            <data-grid></data-grid>
            <p>输入格式：具体数值或数值*d（d为纵筋直径）。来源16G101-1第73页。在绘图输入界面修改此项设置时，需要修改上一层同位置图元的设置。</p>
            <footer><button type="button" class="ok">确定</button><button type="button">取消</button></footer>
            <svg class="grip" width="8" height="8"><path d="M6 0h2v2H6zM3 3h2v2H3zM6 3h2v2H6zM0 6h2v2H0zM3 6h2v2H3zM6 6h2v2H6z"/></svg>
        `);
        const grid = root.querySelector('data-grid');
        grid.data = {
            heads: ['类型名称', '设置值'],
            widths: [22, 0, 121],
            rows: [
                [4, 'last', '暗梁/边框梁箍筋及拉筋弯勾角度', '135°'],
                [5, 'plus', '暗梁', ''],
                [11, 'minus', '剪力墙', ''],
                [12, 'kid', '起始水平分布钢筋距楼面的距离', '50'],
                [13, 'kid', '起始竖向分布钢筋距暗柱边的距离', 's-bhc'],
                [14, 'kid!', '剪力墙纵筋露出长度', '按规范计算'],
                [15, 'kid', '剪力墙基础插筋弯折长度', '按规范计算'],
                [16, 'kid', '剪力墙纵筋错开距离设置', '按规范计算'],
                [17, 'kid', '墙在基础锚固区内左侧水平分布钢筋排数', '间距500'],
                [18, 'kid', '墙在基础锚固区内右侧水平分布钢筋排数', '间距500'],
                [19, 'kid', '暗梁/边框梁/梁纵筋与墙水平钢筋的距离在数值范围内不计算...', 's/2'],
                [20, 'kid', '水平钢筋根数计算方式', '向上取整+1'],
                [21, 'kid', '垂直钢筋根数计算方式', '向上取整+1'],
                [22, 'kid', '墙体拉筋根数计算方式', '向上取整+1'],
                [23, 'kid', '三、四级抗震及非抗震时竖向一级钢筋的端部做法', '180度弯钩'],
                [24, 'kid', '顶层墙身垂直筋锚固计算起点', '从板底开始计算锚固']
            ]
        };
        const bar = document.createElement('div');
        bar.className = 'bar';
        grid.appendChild(bar);
        const input = grid.shadowRoot.querySelector('.edit input');
        input.focus();
        input.select();
    }
}
customElements.define('param-dialog', ParamDialog);

class CadCanvas extends HTMLElement {
    connectedCallback() {
        attach(this, `
            <style>
                :host { display: block; position: relative; overflow: hidden; background: #000; }
                svg { display: block; width: 100%; height: 100%; fill: none; }
                text { fill: #fff; text-anchor: middle; font: 17px "Noto Sans", sans-serif; }
                .size { font: 18px "Noto Sans CJK SC", sans-serif; }
                .green { stroke: #006f00; }
                .ring { stroke: #008000; }
                .dark { stroke: #820000; }
                .red { stroke: #d80000; }
                .white { stroke: #fff; }
                .col { fill: #8b00ff; }
                line { shape-rendering: crispEdges; }
                param-dialog { position: absolute; left: 174px; top: 134px; }
            </style>
            <svg>${this.draw()}</svg>
            <param-dialog></param-dialog>
        `);
    }

    draw() {
        const h = (y, cls) => `<line class="${cls}" x1="0" x2="100%" y1="${y}" y2="${y}"/>`;
        const v = (x, y1, y2, cls) => `<line class="${cls}" x1="${x}" x2="${x}" y1="${y1}" y2="${y2}"/>`;
        const text = (x, y, t) => `<text x="${x}" y="${y + 6}">${t}</text>`;
        const size = (x, y, t) => `<text class="size" x="${x}" y="${y + 7}">${t}</text>`;
        const ring = (x, y) => {
            const pts = [];
            for (let i = 0; i < 10; i++) {
                const a = Math.PI / 5 * i + Math.PI / 2;
                pts.push(`${(x + 12 * Math.cos(a)).toFixed(1)},${(y + 12 * Math.sin(a)).toFixed(1)}`);
            }
            return `<polygon class="ring" points="${pts.join(' ')}"/>`;
        };
        const tick = (x, y) => `<path class="green" d="M${x - 5} ${y + 5}l10-10"/>`;
        const axes = [[130, 2], [435, 3], [741, 4], [1046, 5]];
        let s = '';

        // walls with cross hatching
        for (const y of [347, 587]) {
            s += `<line class="white" x1="6" x2="180" y1="${y}" y2="${y}"/>`;
            for (let x = 8; x < 180; x += 8) s += v(x, y - 5, y + 6, 'white');
        }
        s += v(128, 363, 583, 'white');
        for (let y = 368; y < 583; y += 8) s += `<line class="white" x1="126" x2="135" y1="${y}" y2="${y}"/>`;

        // columns
        for (const [x] of axes) {
            const left = x === 435 ? x - 3 : x - 11;
            s += `<rect class="col" x="${left}" y="341" width="22" height="22"/><rect class="col" x="${left}" y="583" width="22" height="22"/>`;
            s += `<rect class="col" x="${x - 6}" y="247" width="13" height="13"/>`;
        }

        for (const y of [105, 134, 708, 737]) s += h(y, 'dark');
        for (const y of [145, 199, 646, 701]) s += h(y, 'green');
        for (const y of [254, 341, 592]) s += h(y, 'red');
        s += '<path class="green" d="M130 135L12 249"/>';

        for (const [x, name] of axes) {
            s += v(x, 91, 254, 'green') + v(x, 254, 592, 'red') + v(x, 592, 756, 'green');
            s += ring(x, 79) + ring(x, 768) + text(x, 79, name) + text(x, 768, name);
            s += tick(x, 199) + tick(x, 646);
            s += `<path class="dark" d="M${x - 1} 136l3-3M${x - 1} 710l3-3"/>`;
        }
        s += v(432, 24, 819, 'green') + ring(432, 12) + text(432, 12, 3) + ring(432, 831);
        s += '<path class="dark" d="M410 661h22M410 675h22M432 659v20M428 664l8-6M429 658l5 6"/>';

        // row axes at the left edge
        s += ring(12, 253) + ring(11, 254) + text(12, 253, 'A') + text(12, 253, 'C');
        s += ring(12, 341) + text(12, 341, 'B') + ring(12, 592) + text(12, 592, 'A');

        // dimensions
        s += size(5, 173, 0) + size(5, 674, 0) + size(672, 118, 45200) + size(672, 729, 45200);
        for (const x of [283, 588, 893]) s += size(x, 173, 8400) + size(x, 674, 8400);
        s += size(1140, 173, 5200) + size(1140, 674, 5200);

        // coordinate marker
        s += `<path fill="#0f0" d="M48 788v-14h-3l5-12 5 12h-3v14z"/>
            <path fill="#f00" d="M54 791h13v-4l12 6-12 6v-4H54z"/>
            <circle fill="#0000c0" cx="50" cy="793" r="5"/>
            <text x="50" y="762" style="fill: #0f0; font-size: 16px">Y</text>
            <text x="86" y="799" style="fill: #f00; font-size: 16px">X</text>`;
        return s;
    }
}
customElements.define('cad-canvas', CadCanvas);

class AppShell extends HTMLElement {
    connectedCallback() {
        attach(this, `
            <style>
                :host { display: flex; flex-direction: column; height: 100vh; }
                app-title, app-ribbon, option-bar { flex: none; }
                main { flex: 1; min-height: 0; display: grid; grid-template-columns: 210px 4px 280px 4px minmax(0, 1fr); }
                nav-panel, .mid { min-height: 0; }
                .mid { grid-column: 3; display: grid; grid-template-rows: minmax(0, 1fr) minmax(0, 401px); gap: 4px; }
                .split { display: flex; align-items: center; }
                .split button { width: 4px; height: 100px; margin-top: 20px; padding: 0; border: 0; background: #5b6676; }
                .split i { display: block; width: 0; border: 3px solid transparent; border-right: 3px solid #e8e8e8; border-left: 0; }
                cad-canvas { min-width: 0; }
            </style>
            <app-title></app-title>
            <app-ribbon></app-ribbon>
            <option-bar></option-bar>
            <main>
                <nav-panel></nav-panel>
                <div class="mid">
                    <component-panel></component-panel>
                    <property-panel></property-panel>
                </div>
                <div class="split"><button type="button" aria-label="收起面板"><i></i></button></div>
                <cad-canvas></cad-canvas>
            </main>
        `);
    }
}
customElements.define('app-shell', AppShell);
</script>
</body>
</html>
